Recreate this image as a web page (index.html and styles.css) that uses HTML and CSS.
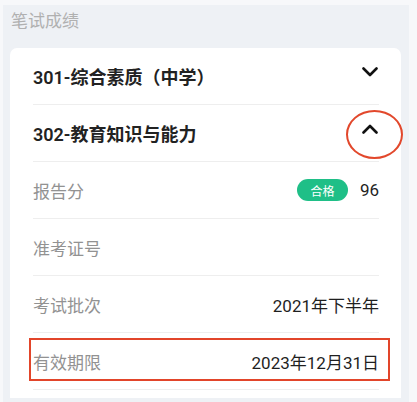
FILE: index.html
```html
<!DOCTYPE html>
<html lang="zh-CN">
<head>
<meta charset="utf-8">
<link rel="stylesheet" href="styles.css">
</head>
<body>
<div class="page">
  <div class="panel">
    <div class="section-title">笔试成绩</div>
    <div class="card">
      <div class="row subject">
        <span class="subject-name">301-综合素质（中学）</span>
        <svg class="chev" width="16" height="10" viewBox="0 0 16 10"><path d="M1.5 1.5 L8 8 L14.5 1.5" fill="none" stroke="#111" stroke-width="2.6" stroke-linecap="round" stroke-linejoin="round"/></svg>
      </div>
      <div class="row subject">
        <span class="subject-name">302-教育知识与能力</span>
        <svg class="chev" width="16" height="10" viewBox="0 0 16 10"><path d="M1.5 8.5 L8 2 L14.5 8.5" fill="none" stroke="#111" stroke-width="2.6" stroke-linecap="round" stroke-linejoin="round"/></svg>
        <span class="circle-mark"></span>
      </div>
      <div class="row">
        <span class="label">报告分</span>
        <span class="value-group"><span class="badge">合格</span><span class="value">96</span></span>
      </div>
      <div class="row">
        <span class="label">准考证号</span>
        <span class="value"></span>
      </div>
      <div class="row">
        <span class="label">考试批次</span>
        <span class="value">2021年下半年</span>
      </div>
      <div class="row">
        <span class="label">有效期限</span>
        <span class="value">2023年12月31日</span>
        <span class="box-mark"></span>
      </div>
    </div>
  </div>
</div>
</body>
</html>
```
FILE: styles.css
```css
* { box-sizing: border-box; }
html, body {
  margin: 0;
  padding: 0;
  width: 417px;
  height: 402px;
  overflow: hidden;
  background: #f7f8fa;
  font-family: "Noto Sans CJK SC", "Noto Sans", sans-serif;
}
.page {
  padding: 5px 8px 0 3px;
  height: 402px;
}
.panel {
  background: #eef1f5;
  height: 397px;
  padding: 3px 0 0 7px;
}
.section-title {
  font-size: 17px;
  line-height: 24px;
  color: #b0b0b0;
  padding-left: 1px;
  margin-bottom: 16px;
}
.card {
  background: #fff;
  width: 391px;
  height: 350px;
  border-radius: 7px 7px 0 0;
  padding: 0 22px 0 23px;
}
.row {
  position: relative;
  display: flex;
  align-items: center;
  justify-content: space-between;
  height: 57px;
  border-bottom: 1px solid #eeeeee;
}
.subject-name {
  font-family: "Roboto", "Noto Sans CJK SC", sans-serif;
  font-size: 18px;
  font-weight: 600;
  color: #222;
}
.chev {
  margin-right: 1px;
  margin-top: -8px;
}
.label {
  font-size: 17px;
  color: #929292;
}
.value {
  font-family: "Roboto", "Noto Sans CJK SC", sans-serif;
  font-size: 17px;
  color: #1f1f1f;
}
.value-group {
  display: flex;
  align-items: center;
}
.badge {
  display: inline-flex;
  align-items: center;
  justify-content: center;
  width: 51px;
  height: 22px;
  border-radius: 11px;
  background: #1fbf87;
  color: #fff;
  font-size: 12px;
  margin-right: 12px;
}
.circle-mark {
  position: absolute;
  right: -24px;
  top: 5px;
  width: 57px;
  height: 49px;
  border: 2px solid #e2482c;
  border-radius: 50%;
}
.box-mark {
  position: absolute;
  left: -4px;
  right: -11px;
  top: 5px;
  height: 43px;
  border: 2.5px solid #e2452a;
}
```
